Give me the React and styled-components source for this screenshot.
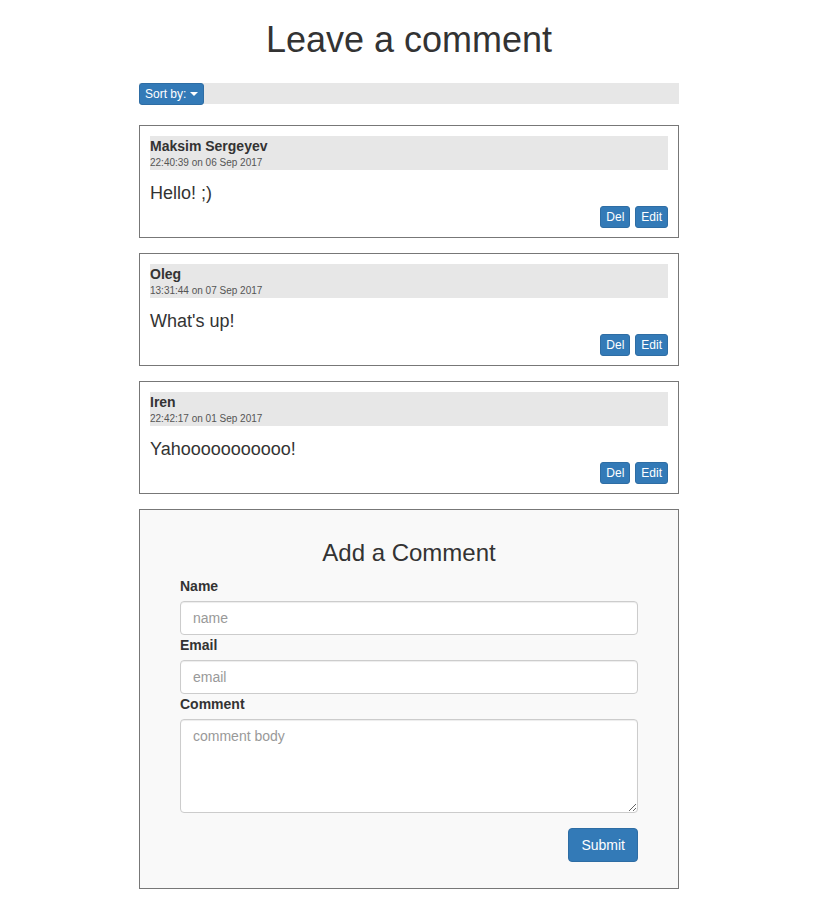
import React from "react";
import styled, { createGlobalStyle } from "styled-components";

const GlobalStyle = createGlobalStyle`
  * { box-sizing: border-box; }
  body {
    margin: 0;
    font-family: "Liberation Sans", Arial, Helvetica, sans-serif;
    font-size: 14px;
    line-height: 1.42857;
    color: #333;
    background: #fff;
  }
`;

const Page = styled.div`
  padding: 0 15px 0 0;
`;

const Container = styled.div`
  width: 540px;
  margin: 0 auto;
`;

const Title = styled.h1`
  margin: 20px 0 23px;
  font-size: 36px;
  font-weight: 500;
  line-height: 1.1;
  text-align: center;
  color: #333;
`;

const SortBar = styled.div`
  display: flex;
  height: 21px;
  background: #e7e7e7;
  margin-bottom: 21px;
`;

const Btn = styled.button`
  display: inline-flex;
  align-items: center;
  font-family: inherit;
  color: #fff;
  background: #337ab7;
  border: 1px solid #2e6da4;
  border-radius: ${(p) => (p.$size === "md" ? "4px" : "3px")};
  font-size: ${(p) => (p.$size === "md" ? "14px" : "12px")};
  line-height: ${(p) => (p.$size === "md" ? "20px" : "18px")};
  padding: ${(p) => (p.$size === "md" ? "6px 12px" : "1px 5px")};
  height: ${(p) => (p.$size === "md" ? "34px" : "22px")};
  flex-shrink: 0;
  cursor: pointer;
`;

const Caret = styled.span`
  display: inline-block;
  width: 0;
  height: 0;
  margin-left: 4px;
  border-top: 4px solid #fff;
  border-left: 4px solid transparent;
  border-right: 4px solid transparent;
`;

const Card = styled.div`
  border: 1px solid #777;
  padding: 10px 10px 9px;
  margin-bottom: 15px;
  background: #fff;
`;

const CardHeader = styled.div`
  background: #e7e7e7;
  display: flex;
  flex-direction: column;
`;

const Author = styled.div`
  font-weight: bold;
  font-size: 14px;
  line-height: 20px;
  color: #333;
`;

const Stamp = styled.div`
  font-size: 10px;
  line-height: 14px;
  color: #555;
`;

const Body = styled.p`
  margin: 10px 0 0;
  font-size: 18px;
  line-height: 26px;
`;

const Actions = styled.div`
  display: flex;
  justify-content: flex-end;
  gap: 5px;
`;

const FormCard = styled.form`
  border: 1px solid #777;
  background: #f9f9f9;
  padding: 10px 40px 26px;
  display: flex;
  flex-direction: column;
`;

const FormTitle = styled.h3`
  margin: 20px 0 10px;
  font-size: 24px;
  font-weight: 500;
  line-height: 1.1;
  text-align: center;
`;

const Label = styled.label`
  display: block;
  font-weight: bold;
  margin-bottom: 5px;
  line-height: 20px;
`;

const fieldCss = `
  display: block;
  width: 100%;
  padding: 6px 12px;
  font-family: "Liberation Sans", Arial, Helvetica, sans-serif;
  font-size: 14px;
  line-height: 20px;
  color: #555;
  background: #fff;
  border: 1px solid #ccc;
  border-radius: 4px;
  box-shadow: inset 0 1px 1px rgba(0,0,0,.075);
  &::placeholder { color: #999; }
`;

const Input = styled.input`
  ${fieldCss}
  height: 34px;
`;

const TextArea = styled.textarea`
  ${fieldCss}
  height: 94px;
`;

const SubmitRow = styled.div`
  display: flex;
  justify-content: flex-end;
  margin-top: 15px;
`;

const comments = [
  { name: "Maksim Sergeyev", time: "22:40:39 on 06 Sep 2017", text: "Hello! ;)" },
  { name: "Oleg", time: "13:31:44 on 07 Sep 2017", text: "What's up!" },
  { name: "Iren", time: "22:42:17 on 01 Sep 2017", text: "Yahooooooooooo!" },
];

export default function App() {
  return (
    <Page>
      <GlobalStyle />
      <Container>
        <Title>Leave a comment</Title>
        <SortBar>
          <Btn type="button">
            Sort by: <Caret />
          </Btn>
        </SortBar>
        {comments.map((c) => (
          <Card key={c.name}>
            <CardHeader>
              <Author>{c.name}</Author>
              <Stamp>{c.time}</Stamp>
            </CardHeader>
            <Body>{c.text}</Body>
            <Actions>
              <Btn type="button">Del</Btn>
              <Btn type="button">Edit</Btn>
            </Actions>
          </Card>
        ))}
        <FormCard onSubmit={(e) => e.preventDefault()}>
          <FormTitle>Add a Comment</FormTitle>
          <Label htmlFor="name">Name</Label>
          <Input id="name" placeholder="name" />
          <Label htmlFor="email">Email</Label>
          <Input id="email" placeholder="email" />
          <Label htmlFor="body">Comment</Label>
          <TextArea id="body" placeholder="comment body" />
          <SubmitRow>
            <Btn type="submit" $size="md">Submit</Btn>
          </SubmitRow>
        </FormCard>
      </Container>
    </Page>
  );
}
